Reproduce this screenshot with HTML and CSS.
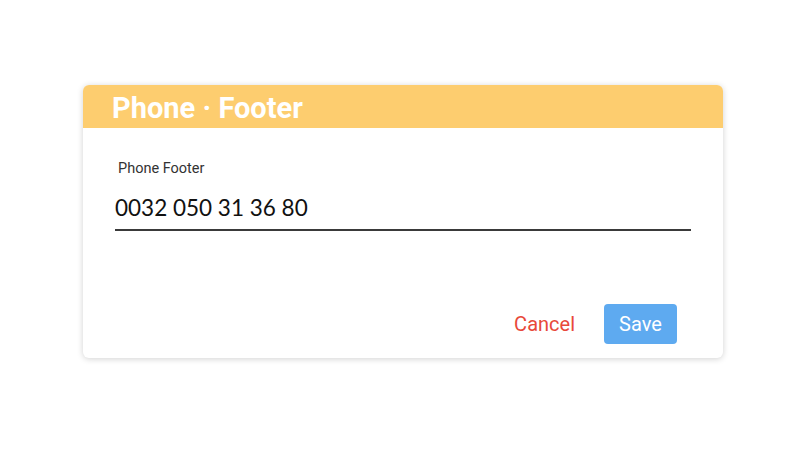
FILE: index.html
```html
<!DOCTYPE html>
<html>
<head>
<meta charset="utf-8">
<link rel="stylesheet" href="styles.css">
</head>
<body>
<div class="page">
  <div class="card">
    <div class="card-header">Phone · Footer</div>
    <div class="card-body">
      <div class="field">
        <label class="field-label">Phone Footer</label>
        <div class="field-value">0032 050 31 36 80</div>
      </div>
      <div class="actions">
        <button class="btn btn-cancel">Cancel</button>
        <button class="btn btn-save">Save</button>
      </div>
    </div>
  </div>
</div>
</body>
</html>
```
FILE: styles.css
```css
html, body {
  margin: 0;
  padding: 0;
  background: #ffffff;
  font-family: Roboto, "Liberation Sans", sans-serif;
}
.page {
  width: 800px;
  height: 450px;
  padding-top: 85px;
  padding-left: 83px;
  box-sizing: border-box;
}
.card {
  width: 640px;
  height: 273px;
  border-radius: 6px;
  background: #fff;
  box-shadow: 0 1px 6px rgba(0,0,0,0.18);
  overflow: hidden;
  display: flex;
  flex-direction: column;
}
.card-header {
  background: #fdcd6f;
  height: 43px;
  color: #fff;
  font-weight: 700;
  font-size: 29px;
  line-height: 47px;
  padding-left: 29px;
}
.card-body {
  flex: 1;
  padding: 31px 32px 14px 32px;
  display: flex;
  flex-direction: column;
}
.field-label {
  display: block;
  font-size: 14.5px;
  color: #333;
  padding-left: 3px;
  line-height: 20px;
}
.field-value {
  margin-top: 14px;
  font-family: Lato, "Open Sans", sans-serif;
  font-weight: 400;
  font-size: 22.5px;
  color: #111;
  line-height: 30px;
  padding-bottom: 6px;
  border-bottom: 2px solid #3a3a3a;
  width: 576px;
}
.actions {
  margin-top: auto;
  display: flex;
  justify-content: flex-end;
  align-items: center;
  gap: 29px;
  padding-right: 14px;
}
.btn {
  font-family: Roboto, "Liberation Sans", sans-serif;
  font-size: 20px;
  border: none;
  background: none;
  cursor: pointer;
}
.btn-cancel {
  color: #e8493a;
  padding: 0;
}
.btn-save {
  background: #5eaaf0;
  color: #fff;
  border-radius: 4px;
  width: 73px;
  height: 40px;
  padding: 0;
}
```
